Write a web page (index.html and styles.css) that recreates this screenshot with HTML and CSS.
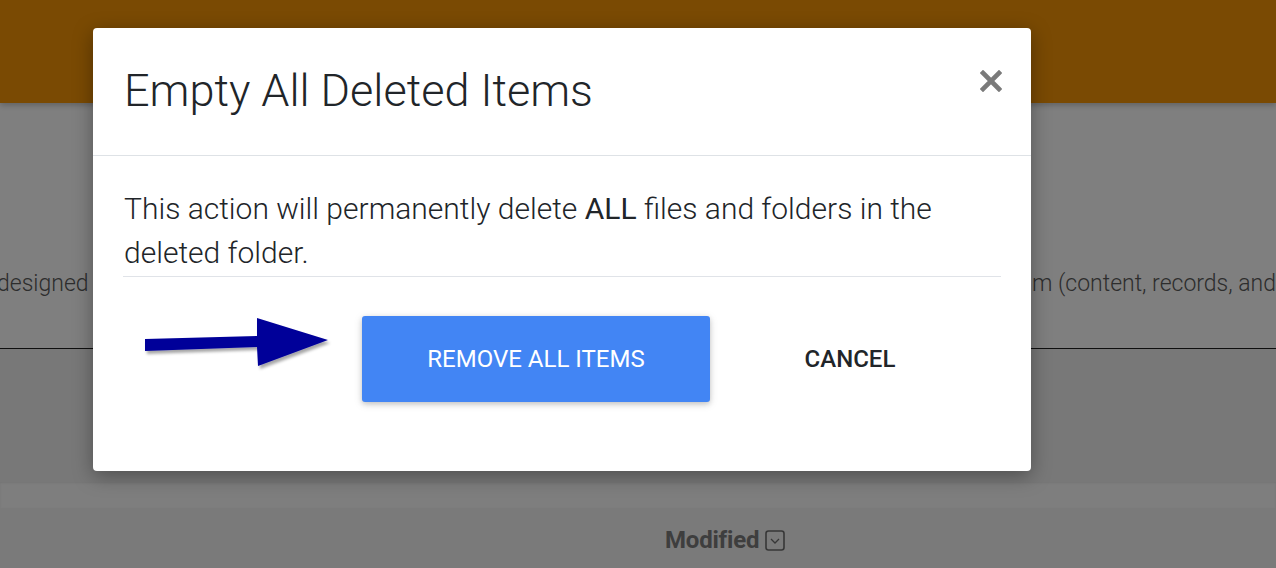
FILE: index.html
```html
<!DOCTYPE html>
<html lang="en">
<head>
<meta charset="utf-8">
<title>Empty All Deleted Items</title>
<link rel="stylesheet" href="styles.css">
</head>
<body>
<div class="page">
  <header class="topbar"></header>
  <section class="intro">
    <div class="intro-line">
      <span class="intro-left">designed to store, manage and share all of the information held within the syste</span>
      <span class="intro-right">m (content, records, and more)</span>
    </div>
  </section>
  <section class="toolbar"></section>
  <section class="list-head"></section>
  <section class="list-cols">
    <span class="col-mod">Modified
      <svg class="sort-ico" viewBox="0 0 20 21" width="20" height="21"><rect x="1" y="1" width="18" height="19" rx="2.5" fill="none" stroke="#6e6e6e" stroke-width="1.6"/><path d="M6 9 L10 13 L14 9" fill="none" stroke="#6e6e6e" stroke-width="1.3"/></svg>
    </span>
  </section>
</div>
<div class="backdrop"></div>
<div class="modal">
  <div class="modal-header">
    <h2 class="modal-title">Empty All Deleted Items</h2>
    <button class="close" aria-label="Close">
      <svg viewBox="0 0 22 22" width="22" height="22"><path d="M3 3 L19 19 M19 3 L3 19" stroke="#7a7a7a" stroke-width="4.6" stroke-linecap="square"/></svg>
    </button>
  </div>
  <div class="modal-body">
    <p class="msg">This action will permanently delete <strong>ALL</strong> files and folders in the deleted folder.</p>
    <hr class="sep">
  </div>
  <div class="modal-footer">
    <svg class="arrow" viewBox="0 0 196 62" width="196" height="62">
      <defs><filter id="sh" x="-10%" y="-20%" width="130%" height="150%"><feDropShadow dx="2" dy="3" stdDeviation="1.6" flood-color="#000" flood-opacity="0.35"/></filter></defs>
      <polygon points="5,27 117,24 117,6 188,28 118,54 117,35 5,39" fill="#000099" filter="url(#sh)"/>
    </svg>
    <button class="btn-primary">REMOVE ALL ITEMS</button>
    <button class="btn-flat">CANCEL</button>
  </div>
</div>
</body>
</html>
```
FILE: styles.css
```css
* { box-sizing: border-box; }
html, body { margin: 0; padding: 0; }
body {
  width: 1276px;
  height: 568px;
  overflow: hidden;
  font-family: Roboto, "Liberation Sans", sans-serif;
  background: #fff;
  position: relative;
}
.page { display: flex; flex-direction: column; height: 568px; }
.topbar {
  height: 103px;
  background: #f49406;
  box-shadow: 0 2px 6px rgba(0,0,0,.25);
  position: relative;
  z-index: 1;
}
.intro {
  height: 246px;
  background: #fff;
  border-bottom: 1px solid #1e1e1e;
  padding-top: 167px;
}
.intro-line {
  display: grid;
  grid-template-columns: 1031px 1fr;
  font-size: 23px;
  font-weight: 300;
  color: #5a5a5a;
  white-space: nowrap;
  line-height: 28px;
}
.intro-left { overflow: hidden; margin-left: -3px; }
.intro-right { overflow: hidden; padding-left: 1px; }
.toolbar { height: 133px; background: #f0f0f0; }
.list-head {
  height: 26px;
  background: #fcfcfc;
  box-shadow: inset 0 1px 2px rgba(0,0,0,.08);
}
.list-cols {
  flex: 1;
  background: #f4f4f4;
  padding-left: 665px;
  padding-top: 18px;
}
.col-mod {
  display: inline-flex;
  align-items: center;
  gap: 6px;
  font-size: 24px;
  font-weight: 700;
  color: #7c7c7c;
  letter-spacing: -0.2px;
}
.sort-ico { display: block; margin-top: 1px; }

.backdrop {
  position: absolute;
  inset: 0;
  background: rgba(0,0,0,.5);
  z-index: 5;
}
.modal {
  position: absolute;
  left: 93px;
  top: 28px;
  width: 938px;
  height: 443px;
  background: #fff;
  border-radius: 4px;
  box-shadow: 0 5px 20px rgba(0,0,0,.35);
  z-index: 10;
  display: flex;
  flex-direction: column;
}
.modal-header {
  height: 128px;
  border-bottom: 1px solid #dee2e6;
  display: flex;
  align-items: flex-start;
  justify-content: space-between;
  padding: 0 29px 0 31px;
}
.modal-title {
  margin: 0;
  padding-top: 37px;
  font-size: 45px;
  font-weight: 300;
  color: #212529;
  line-height: 52px;
}
.close {
  background: none;
  border: 0;
  padding: 0;
  margin-top: 42px;
  width: 22px;
  height: 22px;
  cursor: pointer;
}
.close svg { display: block; }
.modal-body { padding: 31px 30px 0 30px; }
.msg {
  margin: 0;
  padding-left: 1px;
  font-size: 30px;
  font-weight: 300;
  line-height: 44px;
  color: #212529;
}
.msg strong { font-weight: 400; }
.sep {
  margin: 1px 0 0 0;
  border: 0;
  border-top: 1px solid #e0e3e8;
}
.modal-footer {
  display: flex;
  align-items: flex-start;
  padding: 39px 0 0 47px;
}
.arrow { display: block; margin-top: -4px; }
.btn-primary {
  margin-left: 26px;
  width: 348px;
  height: 86px;
  border: 0;
  border-radius: 3px;
  background: #4285f4;
  color: #fff;
  font-family: Roboto, "Liberation Sans", sans-serif;
  font-size: 24px;
  font-weight: 400;
  box-shadow: 0 2px 5px rgba(0,0,0,.16), 0 2px 10px rgba(0,0,0,.12);
}
.btn-flat {
  margin-left: 45px;
  width: 190px;
  height: 86px;
  border: 0;
  background: transparent;
  color: #212529;
  font-family: Roboto, "Liberation Sans", sans-serif;
  font-size: 24px;
  font-weight: 500;
}
```
